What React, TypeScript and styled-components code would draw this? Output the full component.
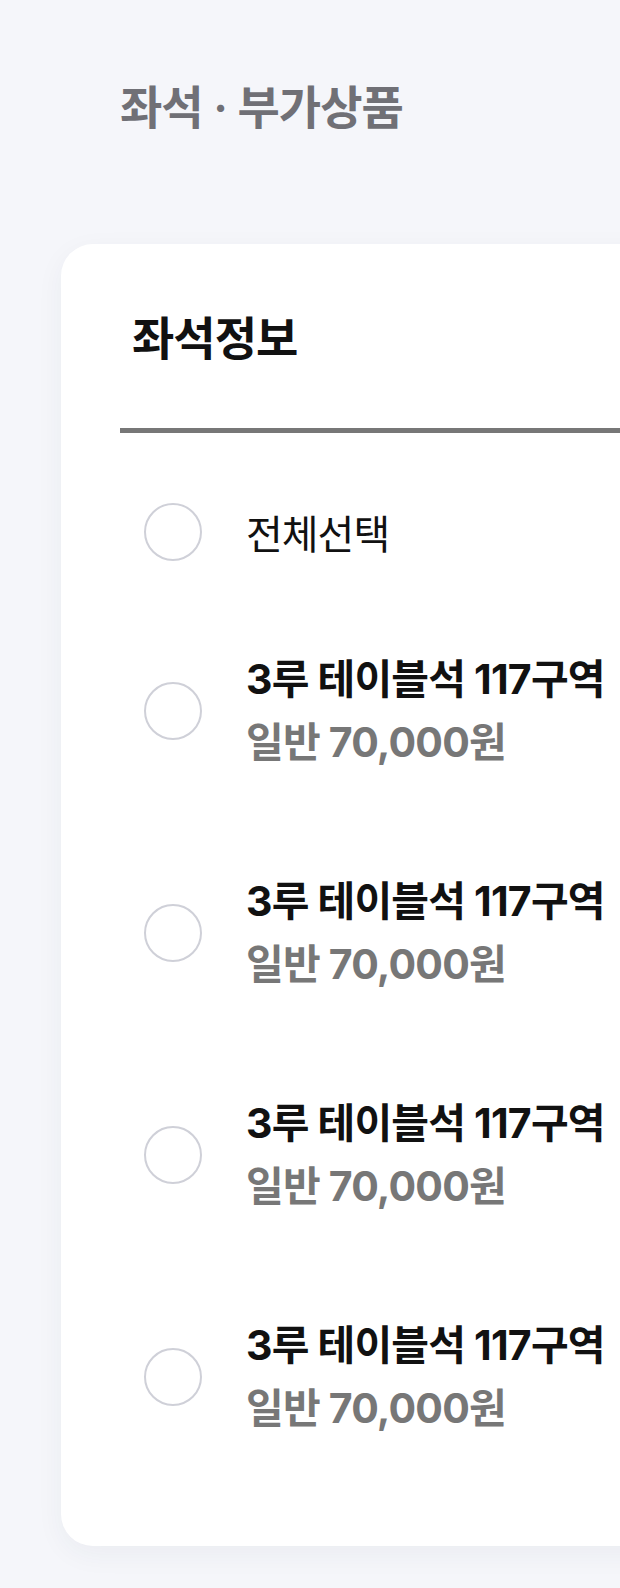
import React, { FC } from 'react';
import styled, { createGlobalStyle } from 'styled-components';

const GlobalStyle = createGlobalStyle`
  html, body {
    margin: 0;
    padding: 0;
    background: #f5f6fa;
    overflow: hidden;
  }
  body {
    font-family: Inter, "Noto Sans CJK KR", sans-serif;
    -webkit-font-smoothing: antialiased;
  }
`;

interface Seat {
  name: string;
  price: string;
}

const SEATS: Seat[] = [
  { name: '3루 테이블석 117구역', price: '일반 70,000원' },
  { name: '3루 테이블석 117구역', price: '일반 70,000원' },
  { name: '3루 테이블석 117구역', price: '일반 70,000원' },
  { name: '3루 테이블석 117구역', price: '일반 70,000원' },
];

const App: FC = () => {
  return (
    <Page>
      <GlobalStyle />
      <PageHeader>
        <PageTitle>좌석 · 부가상품</PageTitle>
      </PageHeader>
      <Card>
        <CardTitle>좌석정보</CardTitle>
        <Divider />
        <SeatList>
          <SelectAllRow>
            <Radio />
            <SelectAllLabel>전체선택</SelectAllLabel>
          </SelectAllRow>
          {SEATS.map((seat, index) => (
            <SeatRow key={index}>
              <Radio />
              <SeatInfo>
                <SeatName>{seat.name}</SeatName>
                <SeatPrice>{seat.price}</SeatPrice>
              </SeatInfo>
            </SeatRow>
          ))}
        </SeatList>
      </Card>
    </Page>
  );
};

export default App;

const Page = styled.div`
  width: 620px;
  min-height: 1588px;
  background: #f5f6fa;
`;

const PageHeader = styled.header`
  box-sizing: border-box;
  height: 244px;
  padding: 78px 0 0 120px;
`;

const PageTitle = styled.h1`
  margin: 0;
  color: #707076;
  font-size: 46px;
  font-weight: 600;
  letter-spacing: -1px;
  line-height: 1.3;
`;

const Card = styled.section`
  box-sizing: border-box;
  width: 640px;
  height: 1302px;
  margin-left: 61px;
  padding: 65px 0 0 59px;
  background: #ffffff;
  border-radius: 32px 0 0 32px;
  box-shadow: 0 8px 28px rgba(40, 50, 80, 0.05);
`;

const CardTitle = styled.h2`
  margin: 0 0 0 12px;
  color: #111111;
  font-size: 46px;
  font-weight: 700;
  letter-spacing: -1px;
  line-height: 1.3;
`;

const Divider = styled.hr`
  margin: 59px 0 0;
  border: 0;
  height: 5px;
  background: #777777;
`;

const SeatList = styled.ul`
  list-style: none;
  margin: 31px 0 0;
  padding: 0 0 0 24px;
`;

const SelectAllRow = styled.li`
  display: flex;
  align-items: center;
  gap: 44px;
  height: 136px;
`;

const SeatRow = styled(SelectAllRow)`
  height: 222px;
`;

const Radio = styled.span`
  box-sizing: border-box;
  flex: none;
  width: 58px;
  height: 58px;
  border: 2.5px solid #cfd0d8;
  border-radius: 50%;
`;

const SelectAllLabel = styled.span`
  color: #111111;
  font-size: 40px;
  font-weight: 400;
  letter-spacing: -1px;
`;

const SeatInfo = styled.div`
  display: flex;
  flex-direction: column;
`;

const SeatName = styled.span`
  color: #111111;
  font-size: 41px;
  font-weight: 700;
  letter-spacing: -0.8px;
  line-height: 63px;
`;

const SeatPrice = styled(SeatName)`
  color: #777777;
`;
